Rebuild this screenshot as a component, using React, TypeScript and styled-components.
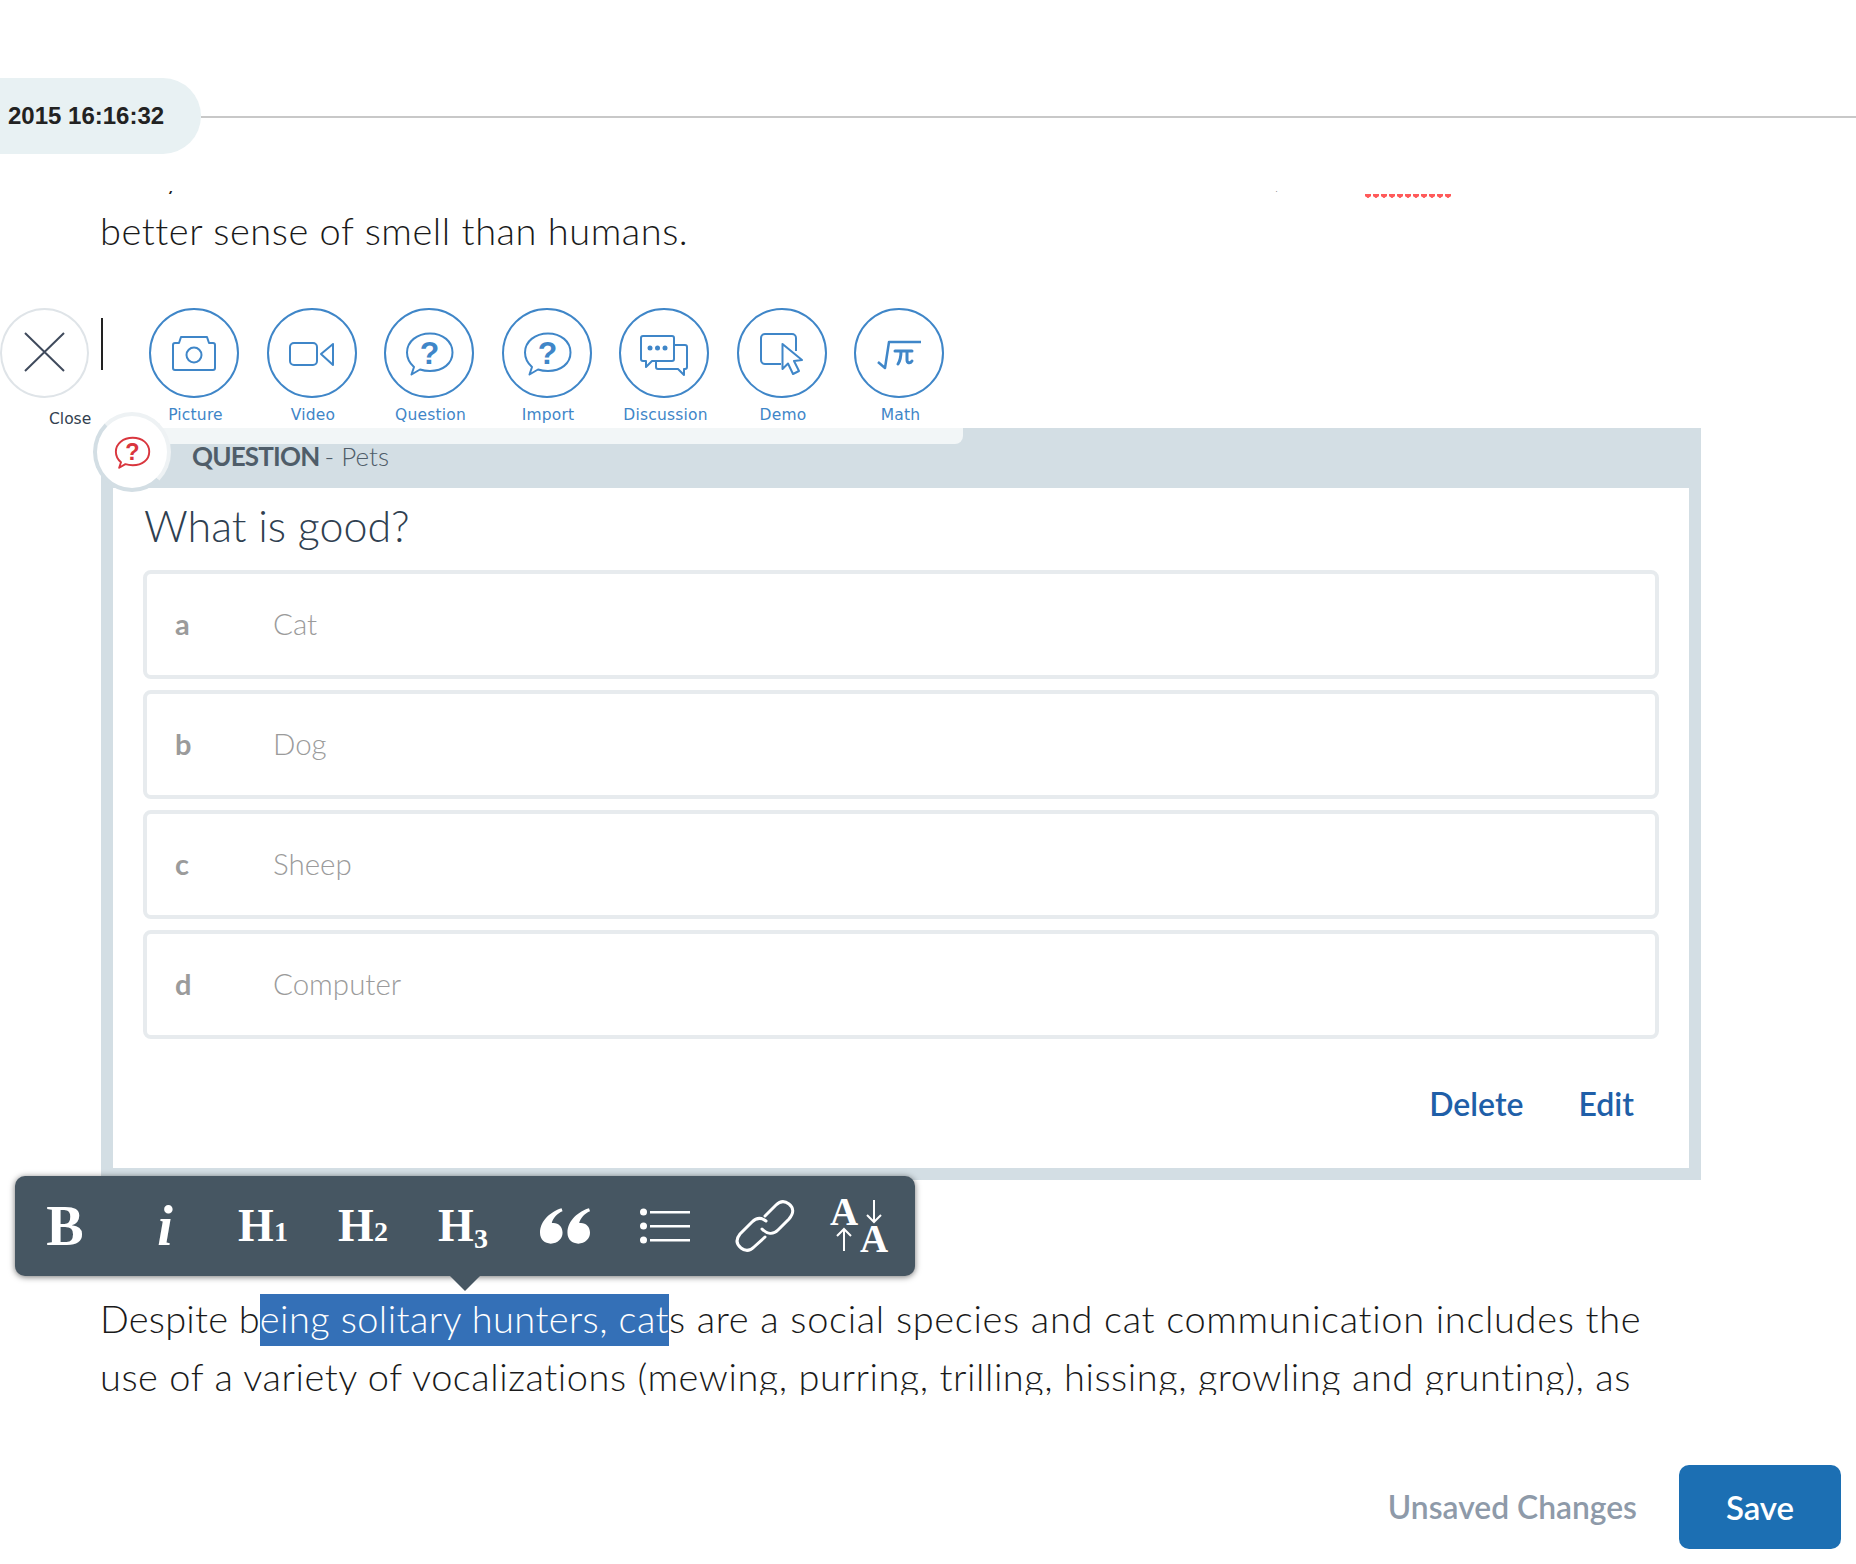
import React from 'react';
import styled, { createGlobalStyle } from 'styled-components';

const GlobalStyle = createGlobalStyle`
  html, body { margin: 0; padding: 0; background: #fff; }
  body { font-family: 'Lato', 'Noto Sans', sans-serif; }
`;

const Page = styled.div`
  width: 1856px;
  height: 1564px;
  overflow: hidden;
  display: flex;
  flex-direction: column;
  background: #fff;
`;

// --- Revision header ---
const RevisionRow = styled.div`
  display: flex;
  align-items: center;
  margin-top: 78px;
  height: 76px;
`;

const RevisionPill = styled.div`
  width: 193px;
  height: 76px;
  padding-left: 8px;
  display: flex;
  align-items: center;
  background: #e8f1f3;
  border-radius: 0 38px 38px 0;
  font: 700 24px 'Liberation Sans', Arial, sans-serif;
  color: #222;
`;

const RevisionRule = styled.div`
  flex: 1;
  height: 2px;
  margin-top: 1px;
  background: #c8c8c8;
`;

// --- Body copy ---
const Copy = styled.div`
  padding-left: 100px;
  font-family: 'Lato', sans-serif;
  font-weight: 300;
  font-size: 38px;
  letter-spacing: 0.54px;
  line-height: 58px;
  color: #1a1a1a;
  white-space: nowrap;
`;

const TopCopy = styled(Copy)`
  position: relative;
  height: 68px;
  margin-top: 37px;
  overflow: hidden;
`;

const ClippedLine = styled.div`
  margin-top: -48px;
`;

const SpellMark = styled.span`
  position: absolute;
  left: 1365px;
  top: 3px;
  width: 86px;
  height: 4px;
  background: radial-gradient(circle at 3px 0.5px, #ff5a5a 3px, transparent 3.4px) 0 0 / 8px 4px repeat-x;
`;

const BottomCopy = styled(Copy)`
  height: 106px;
  margin-top: 109px;
  overflow: hidden;
`;

const LeadRun = styled.span`
  letter-spacing: 0.2px;
`;

const TrailRun = styled.span`
  letter-spacing: 0.67px;
`;

const Selected = styled.span`
  display: inline-block;
  height: 52px;
  line-height: 48px;
  letter-spacing: 0.4px;
  background: #3470b7;
  color: #fff;
`;

// --- Insert toolbar ---
const InsertBar = styled.div`
  position: relative;
  z-index: 2;
  display: flex;
  height: 120px;
  margin-top: 49px;
`;

const CloseColumn = styled.div`
  width: 149px;
  flex: none;
  position: relative;
`;

const CloseCircle = styled.div`
  width: 89px;
  height: 90px;
  box-sizing: border-box;
  border: 2px solid #dfe4e8;
  border-radius: 50%;
`;

const CloseLabel = styled.div`
  margin: 12px 0 0 49px;
  font: 15.5px 'DejaVu Sans', sans-serif;
  color: #333f50;
`;

const Caret = styled.span`
  position: absolute;
  left: 101px;
  top: 10px;
  width: 2px;
  height: 52px;
  background: #222;
`;

const ToolList = styled.div`
  display: flex;
  gap: 27.5px;
`;

const Tool = styled.div`
  width: 90px;
  display: flex;
  flex-direction: column;
  align-items: center;
`;

const ToolCircle = styled.div`
  width: 90px;
  height: 90px;
  box-sizing: border-box;
  border: 2px solid #3f86c8;
  border-radius: 50%;
  svg { display: block; margin: -2px; }
`;

const ToolLabel = styled.div`
  margin-top: 8px;
  padding-left: 3px;
  font: 15.5px 'DejaVu Sans', sans-serif;
  letter-spacing: 0.2px;
  color: #3f86c8;
  white-space: nowrap;
`;

// --- Question card ---
const Article = styled.div`
  position: relative;
  margin-left: 101px;
  width: 1600px;
`;

const Card = styled.div`
  box-sizing: border-box;
  width: 1600px;
  height: 752px;
  border: 12px solid #d3dee4;
  border-top: 0;
  background: #fff;
`;

const CardHeader = styled.div`
  height: 60px;
  margin: 0 -12px;
  padding: 15px 0 0 91px;
  box-sizing: border-box;
  background: #d3dee4;
  font: 300 26px/26px 'Lato', sans-serif;
  color: #4f5d69;
  b { font-weight: 700; letter-spacing: -0.8px; margin-right: -2px; }
`;

const ToolbarStrip = styled.div`
  position: absolute;
  left: 0;
  top: 0;
  width: 862px;
  height: 16px;
  background: #f2f6f7;
  border-radius: 0 0 8px 0;
`;

const Badge = styled.div`
  position: absolute;
  left: -8px;
  top: -16px;
  width: 78px;
  height: 80px;
  box-sizing: border-box;
  border: 4px solid #d3dee4;
  border-top-color: #eef2f4;
  border-right-color: #eef2f4;
  border-radius: 50%;
  background: #fff;
  display: flex;
  align-items: center;
  justify-content: center;
  svg { flex: none; }
`;

const QuestionTitle = styled.div`
  padding: 11px 0 0 31px;
  height: 82px;
  box-sizing: border-box;
  font: 300 43px/54px 'Lato', sans-serif;
  color: #2f4050;
`;

const Options = styled.div`
  display: flex;
  flex-direction: column;
  gap: 11px;
  margin: 0 30px;
`;

const Option = styled.div`
  height: 109px;
  box-sizing: border-box;
  border: 4px solid #e7ebee;
  border-radius: 8px;
  display: flex;
  align-items: center;
  padding: 0 0 3px 28px;
  color: #9b9b9b;
`;

const OptionKey = styled.span`
  width: 98px;
  font: 700 29px 'Lato', sans-serif;
`;

const OptionValue = styled.span`
  font: 300 29.5px 'Lato', sans-serif;
`;

const CardActions = styled.div`
  display: flex;
  justify-content: flex-end;
  gap: 55px;
  margin: 43px 55px 0 0;
  font: 600 32px/44px 'Lato', sans-serif;
  color: #1f5fa8;
`;

// --- Floating format toolbar ---
const FormatBar = styled.div`
  position: absolute;
  left: -86px;
  top: 748px;
  width: 900px;
  height: 100px;
  display: grid;
  grid-template-columns: repeat(9, 100px);
  align-items: center;
  justify-items: center;
  background: #465662;
  border-radius: 10px;
  box-shadow: 0 1px 6px rgba(0, 0, 0, 0.55);
  color: #fff;
  font-family: 'Liberation Serif', serif;
  font-weight: 700;
  &::after {
    content: '';
    position: absolute;
    left: 435px;
    bottom: -15px;
    border-style: solid;
    border-width: 15px 15px 0 15px;
    border-color: #465662 transparent transparent transparent;
  }
`;

const FormatGlyph = styled.span<{ $italic?: boolean }>`
  font-size: 56px;
  line-height: 60px;
  font-style: ${p => (p.$italic ? 'italic' : 'normal')};
`;

const Heading = styled.span`
  font-size: 46px;
  line-height: 50px;
  letter-spacing: -2px;
  margin-left: -4px;
`;

const HeadingDigit = styled.span<{ $drop?: number }>`
  display: inline-block;
  font-size: 28px;
  line-height: 28px;
  letter-spacing: 0;
  margin-left: 2px;
  transform: translateY(${p => p.$drop || 0}px);
`;

// --- Footer ---
const Footer = styled.div`
  display: flex;
  justify-content: flex-end;
  align-items: center;
  gap: 42px;
  margin-top: 70px;
  padding-right: 15px;
`;

const SaveState = styled.span`
  font: 600 31.8px 'Lato', sans-serif;
  color: #8e9aa9;
`;

const SaveButton = styled.button`
  width: 162px;
  height: 84px;
  border: 0;
  border-radius: 10px;
  background: #1c6fb3;
  color: #fff;
  font: 600 33px 'Lato', sans-serif;
`;

const BUBBLE =
  'M30 59C25.5 55 23 50 23 44.5C23 33.5 33 25.5 46 25.5C59 25.5 68.5 33.5 68.5 44.5C68.5 55.5 59 63 46 63C42 63 39 62.5 36 61.5L27.5 66.5Z';

const BubbleIcon = ({ size = 90, color = '#3f86c8', fontSize = 32 }: { size?: number; color?: string; fontSize?: number }) => (
  <svg width={size} height={size} viewBox="0 0 90 90" fill="none">
    <path d={BUBBLE} stroke={color} strokeWidth={size < 90 ? 2.6 : 2} strokeLinejoin="round" />
    <text x="45.5" y="56" textAnchor="middle" fontFamily="Liberation Sans" fontWeight="700" fontSize={fontSize} fill={color}>?</text>
  </svg>
);

const Stroke = ({ children }: { children: React.ReactNode }) => (
  <svg width="90" height="90" viewBox="0 0 90 90" fill="none" stroke="#3f86c8" strokeWidth="2" strokeLinejoin="round">
    {children}
  </svg>
);

const tools: { label: string; icon: React.ReactNode }[] = [
  {
    label: 'Picture',
    icon: (
      <Stroke>
        <path d="M26 35H30L32 29H58L60 35H64A2 2 0 0 1 66 37V60A2 2 0 0 1 64 62H26A2 2 0 0 1 24 60V37A2 2 0 0 1 26 35Z" />
        <circle cx="45" cy="47" r="7.5" />
      </Stroke>
    ),
  },
  {
    label: 'Video',
    icon: (
      <Stroke>
        <rect x="23" y="35" width="27" height="22" rx="4" />
        <path d="M54 46L66 36V57Z" />
      </Stroke>
    ),
  },
  { label: 'Question', icon: <BubbleIcon /> },
  { label: 'Import', icon: <BubbleIcon /> },
  {
    label: 'Discussion',
    icon: (
      <Stroke>
        <path d="M24 28H53A2 2 0 0 1 55 30V51A2 2 0 0 1 53 53H33L27 59V53H24A2 2 0 0 1 22 51V30A2 2 0 0 1 24 28Z" />
        <path d="M55 37H66A2 2 0 0 1 68 39V59A2 2 0 0 1 66 61H65V67L59 61H39A2 2 0 0 1 37 59V53" />
        <g fill="#3f86c8" stroke="none">
          <circle cx="31" cy="40" r="2.5" />
          <circle cx="38.5" cy="40" r="2.5" />
          <circle cx="46" cy="40" r="2.5" />
        </g>
      </Stroke>
    ),
  },
  {
    label: 'Demo',
    icon: (
      <Stroke>
        <path d="M44 56H28A4 4 0 0 1 24 52V30A4 4 0 0 1 28 26H55A4 4 0 0 1 59 30V43" />
        <path d="M45.5 36V61L51 55.5L56 66L62 63L57 53L65 52Z" />
      </Stroke>
    ),
  },
  {
    label: 'Math',
    icon: (
      <Stroke>
        <path d="M24 54L31 60L35 34H67" strokeWidth="2.5" />
        <path d="M41 43H58M47 43C47 49 46 53 44 56M53 43V52C53 55 56 56 58 53" strokeWidth="3" strokeLinecap="round" />
      </Stroke>
    ),
  },
];

const CloseIcon = () => (
  <svg width="89" height="90" viewBox="0 0 89 90" fill="none" stroke="#3f4a5c" strokeWidth="2" style={{ display: 'block', margin: -2 }}>
    <path d="M25 25L64 63M64 25L25 63" />
  </svg>
);

const QuoteIcon = () => (
  <svg width="50" height="36" viewBox="0 0 51 36" fill="#fff">
    <path d="M22 0C12 3 0 12 0 25C0 32 5 36 11 36C18 36 23 31 23 25C23 18 18 14 12 15C13 10 18 5 23 3Z" />
    <path d="M50 0C40 3 28 12 28 25C28 32 33 36 39 36C46 36 51 31 51 25C51 18 46 14 40 15C41 10 46 5 51 3Z" />
  </svg>
);

const ListIcon = () => (
  <svg width="50" height="36" viewBox="0 0 50 36" fill="#fff" stroke="none">
    <circle cx="3.5" cy="4" r="3.5" />
    <circle cx="3.5" cy="18" r="3.5" />
    <circle cx="3.5" cy="32" r="3.5" />
    <rect x="10" y="3" width="40" height="2.5" />
    <rect x="10" y="17" width="40" height="2.5" />
    <rect x="10" y="31" width="40" height="2.5" />
  </svg>
);

const LinkIcon = () => (
  <svg width="60" height="56" viewBox="15 12 60 56" fill="none" stroke="#fff" strokeWidth="3" strokeLinecap="round">
    <path d="M42 43C47 48 53 49 58 44L69 33C74 27 74 22 69 18C64 14 60 15 56 19L45 30" />
    <path d="M46 35C41 31 36 32 32 36L20 48C16 53 16 58 21 62C26 66 30 65 34 61L45 51" />
  </svg>
);

const FontSizeIcon = () => (
  <svg width="80" height="82" viewBox="105 0 80 82" fill="none" stroke="#fff" strokeWidth="2">
    <g fill="#fff" stroke="none" fontFamily="Liberation Serif" fontWeight="700" fontSize="39" textAnchor="middle">
      <text x="124" y="40">A</text>
      <text x="154" y="66.5">A</text>
    </g>
    <path d="M154 15V36M147 30L154 37L161 30" />
    <path d="M124 66V44M117 51L124 44L131 51" />
  </svg>
);

export default function App() {
  return (
    <Page>
      <GlobalStyle />
      <RevisionRow>
        <RevisionPill>2015 16:16:32</RevisionPill>
        <RevisionRule />
      </RevisionRow>

      <TopCopy>
        <ClippedLine>They can also detect the faintest sounds and have a much finer touch, and a much</ClippedLine>
        <SpellMark />
        <div>better sense of smell than humans.</div>
      </TopCopy>

      <InsertBar>
        <CloseColumn>
          <CloseCircle>
            <CloseIcon />
          </CloseCircle>
          <CloseLabel>Close</CloseLabel>
          <Caret />
        </CloseColumn>
        <ToolList>
          {tools.map(tool => (
            <Tool key={tool.label}>
              <ToolCircle>{tool.icon}</ToolCircle>
              <ToolLabel>{tool.label}</ToolLabel>
            </Tool>
          ))}
        </ToolList>
      </InsertBar>

      <Article>
        <Card>
          <CardHeader>
            <b>QUESTION</b> - Pets
          </CardHeader>
          <QuestionTitle>What is good?</QuestionTitle>
          <Options>
            {[
              ['a', 'Cat'],
              ['b', 'Dog'],
              ['c', 'Sheep'],
              ['d', 'Computer'],
            ].map(([key, value]) => (
              <Option key={key}>
                <OptionKey>{key}</OptionKey>
                <OptionValue>{value}</OptionValue>
              </Option>
            ))}
          </Options>
          <CardActions>
            <span>Delete</span>
            <span>Edit</span>
          </CardActions>
        </Card>
        <ToolbarStrip />
        <Badge>
          <BubbleIcon size={66} color="#d9363e" fontSize={32} />
        </Badge>
        <FormatBar>
          <FormatGlyph>B</FormatGlyph>
          <FormatGlyph $italic>i</FormatGlyph>
          <Heading>H<HeadingDigit>1</HeadingDigit></Heading>
          <Heading>H<HeadingDigit>2</HeadingDigit></Heading>
          <Heading>H<HeadingDigit $drop={7}>3</HeadingDigit></Heading>
          <QuoteIcon />
          <ListIcon />
          <LinkIcon />
          <FontSizeIcon />
        </FormatBar>
      </Article>

      <BottomCopy>
        <div>
          <LeadRun>Despite b</LeadRun>
          <Selected>eing solitary hunters, cat</Selected>
          <TrailRun>s are a social species and cat communication includes the</TrailRun>
        </div>
        <div>use of a variety of vocalizations (mewing, purring, trilling, hissing, growling and grunting), as</div>
      </BottomCopy>

      <Footer>
        <SaveState>Unsaved Changes</SaveState>
        <SaveButton>Save</SaveButton>
      </Footer>
    </Page>
  );
}
